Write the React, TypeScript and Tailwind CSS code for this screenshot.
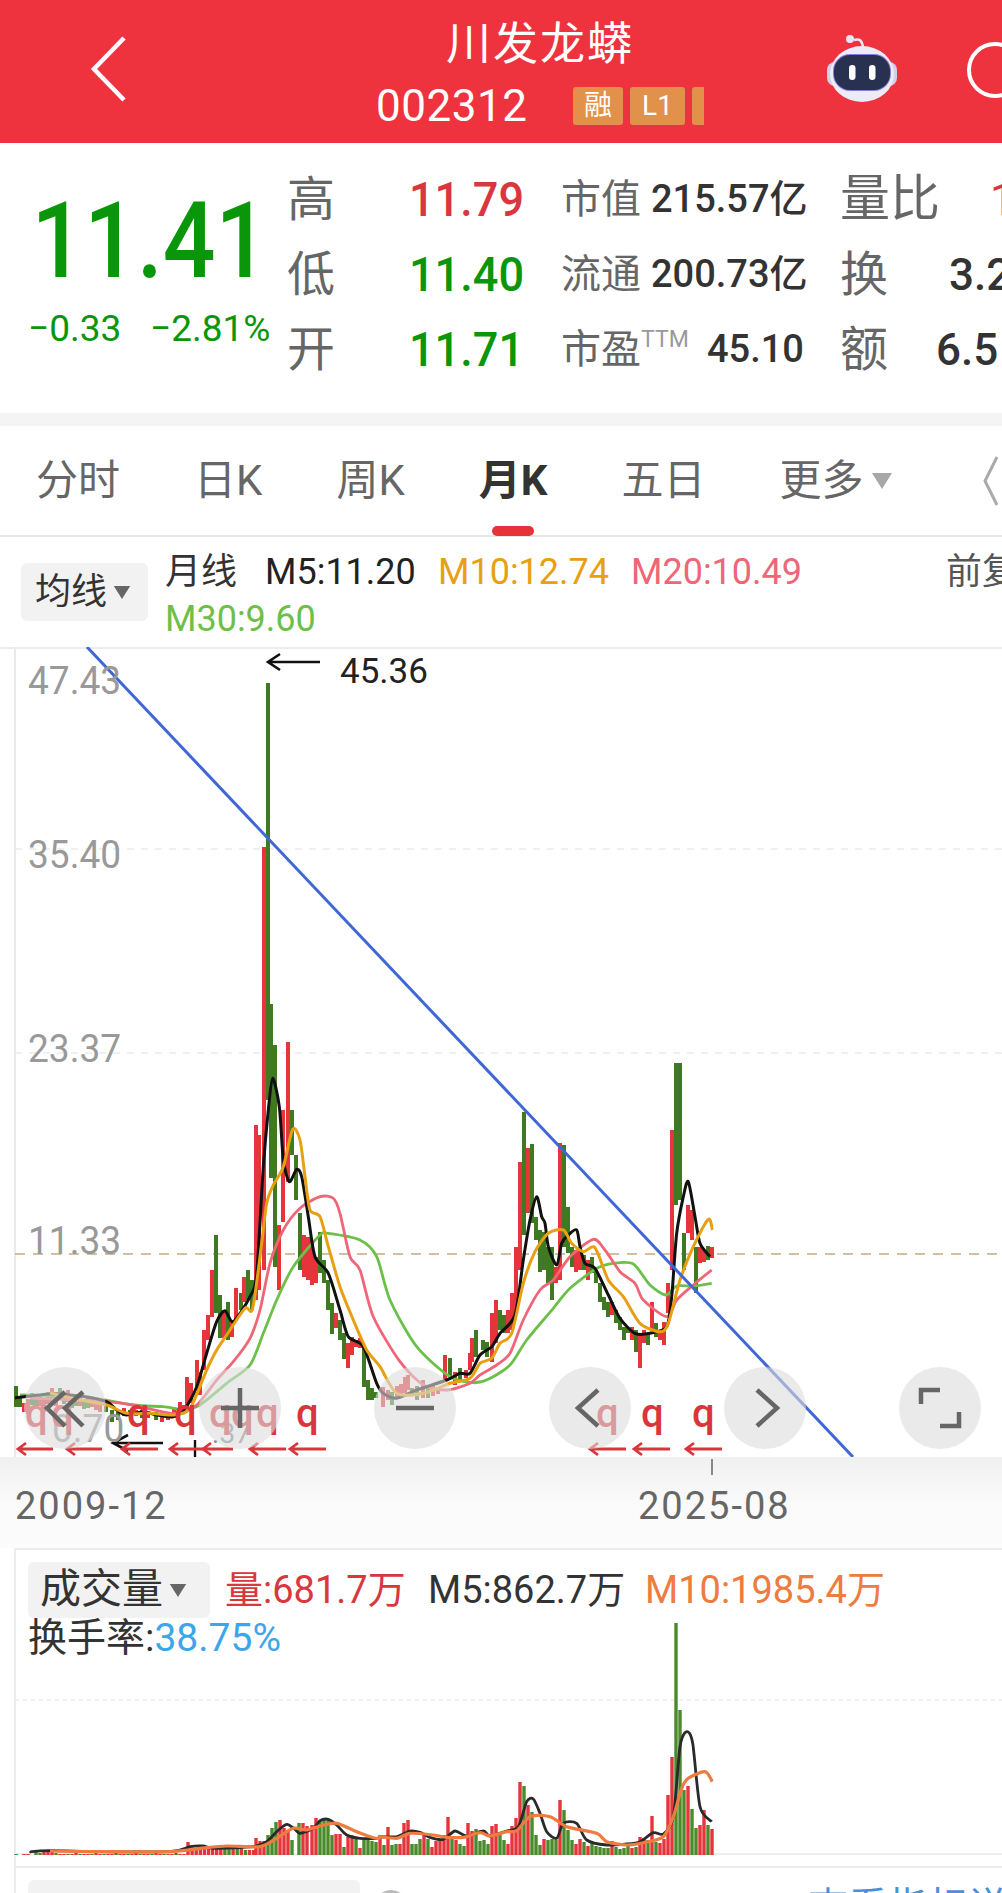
import React from "react";

type P = [number, number];
const z3 = (a: number[]): P[] => { const r: P[] = []; for (let i = 0; i < a.length; i += 2) r.push([a[i] / 3, 1000 + a[i + 1] / 3]); return r; };
const z10 = (a: number[]): P[] => { const r: P[] = []; for (let i = 0; i < a.length; i += 2) r.push([480 + a[i] / 3, 1100 + a[i + 1] / 3]); return r; };
const z11 = (a: number[]): P[] => { const r: P[] = []; for (let i = 0; i < a.length; i += 2) r.push([a[i] / 3, 1740 + a[i + 1] / 3]); return r; };
const z12 = (a: number[]): P[] => { const r: P[] = []; for (let i = 0; i < a.length; i += 2) r.push([380 + a[i] / 3, 1620 + a[i + 1] / 3]); return r; };

function smooth(p: P[]) {
  let d = `M${p[0][0].toFixed(1)} ${p[0][1].toFixed(1)}`;
  for (let i = 0; i < p.length - 1; i++) {
    const a = p[Math.max(0, i - 1)], b = p[i], c = p[i + 1], e = p[Math.min(p.length - 1, i + 2)];
    const k = 1 / 6 * 0.8;
    d += `C${(b[0] + (c[0] - a[0]) * k).toFixed(1)} ${(b[1] + (c[1] - a[1]) * k).toFixed(1)} ${(c[0] - (e[0] - b[0]) * k).toFixed(1)} ${(c[1] - (e[1] - b[1]) * k).toFixed(1)} ${c[0].toFixed(1)} ${c[1].toFixed(1)}`;
  }
  return d;
}

const RED = "#e5353a";
const GREEN = "#3f7a22";

// x, top, bottom, colour (1 red, 0 green)
const candles: number[][] = [
  [16,1386,1407,0],[20,1396,1407,0],[24,1403,1412,1],[28,1399,1414,1],[32,1393,1405,0],[36,1398,1408,0],[40,1395,1406,1],[44,1400,1412,1],[48,1392,1404,1],[52,1388,1402,1],[56,1392,1406,1],[60,1388,1400,0],[64,1396,1404,0],[68,1390,1402,1],[72,1396,1408,0],[76,1398,1406,0],[80,1396,1406,1],[84,1399,1409,0],[88,1398,1408,0],[92,1399,1407,1],[96,1400,1410,1],
  [100,1402,1412,1],[106,1402,1412,0],[112,1410,1422,0],[118,1412,1420,0],[124,1408,1416,1],[130,1410,1416,0],[136,1410,1416,1],[142,1410,1418,0],[148,1412,1418,1],[156,1412,1420,0],[162,1416,1422,1],[168,1412,1420,1],[174,1408,1418,1],[180,1402,1412,1],
  [187,1377,1407,1],[191,1383,1403,1],[197,1360,1390,1],[200,1372,1395,1],[204,1330,1370,1],[208,1315,1340,1],[212,1270,1317,1],[216,1235,1313,0],[220,1295,1338,0],[224,1310,1338,1],[228,1302,1340,0],[232,1320,1337,1],[236,1288,1320,1],[241,1293,1310,0],[244,1277,1302,1],[248,1270,1300,0],[252,1280,1310,0],[256,1125,1300,1],[259,1135,1290,1],[264,847,1270,1],[268,683,1100,0],[271,1004,1178,0],[275,1045,1267,0],[279,1225,1290,1],[283,1110,1222,1],[288,1042,1182,1],[292,1110,1155,0],[296,1155,1200,0],[300,1213,1270,0],[304,1235,1277,1],[308,1237,1280,1],[312,1240,1285,1],[316,1257,1283,1],[320,1232,1273,0],[324,1260,1283,0],[328,1280,1310,0],[332,1303,1334,0],[336,1313,1328,1],[340,1320,1340,0],[344,1333,1359,0],[348,1343,1368,1],[352,1337,1355,1],[356,1340,1347,1],[360,1338,1348,1],[364,1345,1387,0],[368,1380,1400,0],[372,1388,1400,0],[376,1392,1398,0],
  [383,1387,1407,1],[388,1390,1400,1],[392,1392,1405,0],[397,1386,1398,1],[401,1384,1396,1],[405,1377,1393,1],[408,1375,1390,1],[412,1388,1396,0],[417,1386,1400,0],[423,1380,1398,1],[428,1388,1398,0],[433,1384,1396,1],[438,1388,1394,1],[445,1355,1380,1],[450,1358,1377,0],[455,1372,1385,1],[460,1368,1380,0],[466,1370,1378,1],[470,1353,1370,1],[472,1338,1362,1],[476,1330,1357,0],
  [483,1340,1350,0],[487,1342,1357,0],[492,1313,1362,1],[496,1300,1343,1],[500,1310,1330,0],[504,1315,1333,0],[508,1310,1333,1],[512,1293,1330,1],[516,1247,1313,1],[520,1162,1270,1],[524,1112,1235,0],[528,1148,1213,1],[532,1144,1223,0],[536,1217,1240,0],[540,1230,1272,0],[544,1232,1270,0],[548,1247,1283,0],[552,1247,1300,0],[556,1267,1283,1],[560,1143,1280,1],[564,1145,1247,0],[568,1207,1253,0],[572,1247,1267,0],[576,1250,1272,1],[580,1250,1270,1],[584,1255,1270,0],[588,1260,1280,1],[592,1257,1273,0],[596,1270,1283,0],[600,1283,1302,0],[604,1297,1310,0],[608,1302,1317,0],[612,1302,1315,1],[616,1310,1323,0],[620,1317,1330,0],[624,1327,1340,0],[628,1328,1333,0],[632,1327,1340,1],[636,1330,1352,0],[640,1333,1368,1],[644,1330,1343,1],[648,1333,1345,0],[652,1302,1330,1],[656,1323,1337,0],[660,1330,1340,1],[664,1322,1345,1],[668,1283,1313,1],[672,1130,1270,1],[676,1063,1205,0],[680,1063,1200,0],[684,1233,1270,0],[688,1205,1233,1],[692,1210,1240,1],[696,1247,1293,0],[700,1247,1263,1],[704,1250,1262,1],[708,1246,1260,0],[712,1247,1258,1],
];

const m5 = smooth([[15,1398],[50,1394],[80,1396],...z3([320,1205,350,1230,380,1245,430,1235,470,1245,520,1250,555,1225,590,1160,620,1060,650,965,675,932,700,965,750,890,770,820,790,500,805,330,818,235,838,320,850,480,868,545,890,508,905,530,925,650,945,770,985,820,1020,930,1045,1010,1090,1040,1130,1150,1150,1180,1190,1195,1250,1170,1340,1140,1380,1120,1410,1120]),...z10([0,765,35,740,60,700,105,645,130,480,150,360,170,290,185,350,195,370,205,440,230,495,245,430,265,405,290,390,300,440,315,490,345,505,385,585,420,655,465,700,510,700,560,680,575,590,590,400,610,290,625,245,645,350,660,430,690,470])]);
const m10 = smooth([[50,1393],...z3([240,1200,320,1215,380,1240,450,1240,520,1245,570,1225,620,1110,650,1050,680,1005,735,925,758,925,785,730,800,610,820,555,850,500,878,388,900,420,915,530,930,630,960,650,985,740,1020,860,1060,960,1100,1050,1140,1100,1190,1180,1270,1180,1350,1150,1410,1135]),...z10([0,790,35,775,60,730,95,700,130,550,165,455,205,400,250,390,275,430,310,455,345,443,385,540,430,590,480,670,540,695,565,670,600,540,640,440,685,358,697,390])]);
const m20 = smooth([[30,1398],...z3([320,1205,400,1215,520,1240,590,1215,650,1140,700,1085,750,1015,780,930,810,790,850,690,900,625,960,590,1000,595,1020,640,1050,770,1080,810,1120,950,1200,1085,1270,1155,1340,1170,1410,1150]),...z10([0,825,50,795,90,760,130,660,180,570,220,540,270,470,340,418,375,450,420,515,465,550,490,600,560,650,590,600,640,555,695,510])]);
const m30 = smooth([[20,1395],...z3([250,1190,400,1215,490,1220,550,1228,600,1215,680,1150,750,1095,790,1000,830,900,880,800,960,705,985,700,1080,720,1130,770,1170,900,1250,1040,1350,1130,1420,1148]),...z10([25,838,90,795,140,720,220,625,270,565,350,505,400,490,460,492,510,555,558,585,590,558,640,558,695,550])]);

const arrows: P[] = [[18,53],[67,102],[122,158],[170,205],[203,233],[250,286],[290,326],[590,626],[634,670],[686,722]];
const qs: P[] = [[36,0],[62,0],[138,1],[185,1],[220,1],[242,1],[267,1],[307,1],[607,1],[652,1],[703,1]];

const volHeadS = "13,8,7,8,7,8,9,6,9,9,8,8,8,7,5,5,5".split(",").map(Number);
const vol: number[][] = [];
[[16,1,0],[24,1,1],[28,1,1],[36,3,0],[40,2,0],[44,3,1],[48,3,1],[52,3,1]].forEach(v => vol.push(v));
for (let i = 0; i < 33; i++) vol.push([56 + i * 4, i % 5 === 0 ? 2 : 1, i % 3 === 0 ? 0 : 1]);
volHeadS.forEach((h, i) => vol.push([188 + i * 4.1, h, [9, 10, 12, 14].includes(i) ? 0 : 1]));
([[256,17,1],[260,14,1],[264,14,1],[268,20,0],[272,27,0],[276,33,0],[280,35,1],[284,27,1],[288,25,1],[292,15,0],[299,32,0],[303,32,1],[307,29,1],[312,30,1],[316,37,1],[320,34,0],[324,35,0],[328,36,0],[332,20,0],[336,21,1],[340,21,1],[344,8,0],[348,18,1],[352,20,1],[356,16,0],[360,7,1],[364,15,0],[368,15,0],[372,14,0],[376,13,0]] as number[][]).forEach(v => vol.push(v));
const v12 = "20r 10g 28r 10g 11g 11r 32r 35r 11g 11g 16g 20r 16g 8r 14r 14r 20r 38r 16g 15r 11g 9g 32r 24r 26g 14g 15g 11g 29r 31r 20g 15g 11r 29r 37r 73r 69g 50r 43g 20g 10g 16r 15g 16g 15g 55r 45g 25g 15g 11r 16r 13g 9r 12g 9g 8g 7g 7g 14r 8g 6g 7g 11g 7r 8g 18r 17r 15g 39r 13g 12r 16r 60r 98r 232g 145g 65g 69r 46g 27g 30r 45r 30g 26r".split(" ");
v12.forEach((s, i) => vol.push([380 + i * 4, parseInt(s), s.endsWith("r") ? 1 : 0]));

const vm5 = smooth([[32,1853],...z11([95,335,150,332,300,335,510,335,570,320,610,318,640,325,760,320,800,305,830,275,860,253,885,268,900,280,940,265,960,242,985,238,1010,255,1040,285,1080,295,1138,295]),...z12([0,650,50,650,90,633,120,637,150,652,190,658,225,633,260,648,310,633,330,648,380,633,415,620,440,545,460,537,480,580,500,635,530,655,550,610,590,610,620,660,680,675,740,672,780,665,820,638,850,642,880,590,900,380,920,335,938,370,960,560,995,605])]);
const vm10 = smooth([...z11([150,333,300,335,510,335,600,325,680,318,780,320,830,295,880,265,920,270,960,258,1010,250,1070,275,1120,293,1138,295]),...z12([0,650,50,655,90,640,160,645,200,652,250,652,300,638,330,648,380,635,410,632,450,590,510,590,560,620,650,640,680,665,740,675,790,668,850,650,880,590,905,505,925,475,975,455,997,485])]);

const CaretDown = ({ c = "#a8a8a8", w = 22, h = 18 }: { c?: string; w?: number; h?: number }) => (
  <svg className="shrink-0" width={w} height={h} viewBox="0 0 22 18"><path d="M1 1H21L11 17Z" fill={c} /></svg>
);

const Round = ({ d, cx }: { d: string; cx: number }) => (
  <div className="absolute top-[718px] w-[82px] h-[82px] rounded-full bg-[#dcdcdc]/60 flex items-center justify-center" style={{ left: cx - 41 }}>
    <svg width="48" height="48" viewBox="0 0 48 48" fill="none" stroke="#666666" strokeWidth="4.5"><path d={d} /></svg>
  </div>
);

const Robot = () => (
  <svg className="shrink-0" width="76" height="70" viewBox="0 0 76 70">
    <path d="M30 8C36 6 38 9 39 15" fill="none" stroke="#e8e6f5" strokeWidth="2.5" />
    <circle cx="26" cy="7" r="4" fill="#e8e6f5" />
    <rect x="3" y="30" width="70" height="24" rx="8" fill="#cfd0ea" />
    <ellipse cx="38" cy="42" rx="32" ry="28" fill="#ecebf8" />
    <rect x="9" y="22" width="58" height="37" rx="17" fill="#8c7ad8" />
    <rect x="10" y="23" width="56" height="35" rx="16" fill="#28314f" />
    <rect x="25" y="33" width="6.5" height="15" rx="3.2" fill="#ffffff" />
    <rect x="45" y="33" width="6.5" height="15" rx="3.2" fill="#ffffff" />
  </svg>
);

const Lbl = ({ t, top, left = 28 }: { t: string; top: number; left?: number }) => (
  <span className="absolute text-[#999999] text-[39px] leading-[40px] origin-left scale-x-[0.95]" style={{ top, left }}>{t}</span>
);

export default function App() {
  return (
    <div className="w-[1002px] h-[1893px] overflow-hidden bg-white font-['Roboto','Noto_Sans_CJK_SC',sans-serif]">
      {/* header */}
      <header className="h-[143px] bg-[#ef333e] grid grid-cols-[300px_480px_222px] text-white">
        <div className="pl-[88px] pt-[35px]">
          <svg width="42" height="68" viewBox="0 0 42 68" fill="none" stroke="#ffffff" strokeWidth="4.5"><path d="M36 3L6 34L36 65" /></svg>
        </div>
        <div className="flex flex-col items-center pt-[18px]">
          <h1 className="text-[45px] leading-[54px] tracking-[2px]">川发龙蟒</h1>
          <div className="flex items-center mt-[14px] h-[40px]">
            <span className="text-[44px] leading-[40px] w-[146px] tracking-[0.5px] whitespace-nowrap">002312</span>
            <span className="ml-[51px] w-[50px] h-[38px] rounded-[3px] bg-[#e2914a] flex items-center justify-center text-[28px]">融</span>
            <span className="ml-[7px] w-[55px] h-[38px] rounded-[3px] bg-[#e2914a] flex items-center justify-center text-[28px]">L1</span>
            <span className="ml-[7px] w-[12px] h-[38px] rounded-l-[3px] bg-[#e2914a]"></span>
          </div>
        </div>
        <div className="flex items-start pt-[32px] pl-[44px]">
          <Robot />
          <div className="ml-[67px] mt-[10px] w-[56px] h-[56px] rounded-full border-4 border-white shrink-0"></div>
        </div>
      </header>

      {/* quote */}
      <section className="h-[270px] flex pt-[19px] relative">
        <div className="w-[287px] shrink-0 pl-[28px] text-[#0a960a]">
          <div className="text-[106px] leading-[100px] mt-[29px] font-medium origin-left scale-x-[0.875] pl-[4px]">11.41</div>
          <div className="flex mt-[18px] text-[37px] leading-[40px]">
            <span className="w-[122px]">−0.33</span>
            <span>−2.81%</span>
          </div>
        </div>
        <div className="w-[274px] shrink-0 grid grid-rows-[75px_75px_75px] text-[#666666] text-[48px]">
          {[["高", "11.79", "text-[#d9363e]"], ["低", "11.40", "text-[#0a960a]"], ["开", "11.71", "text-[#0a960a]"]].map(([a, b, c]) => (
            <div key={a} className="flex items-center">
              <span className="w-[122px] leading-[50px]">{a}</span>
              <span className={`${c} text-[49px] leading-[50px] font-medium origin-left scale-x-[0.92]`}>{b}</span>
            </div>
          ))}
        </div>
        <div className="w-[279px] shrink-0 grid grid-rows-[75px_75px_75px] text-[40px] text-[#666666]">
          <div className="flex items-center"><span className="w-[90px]">市值</span><span className="text-[#333333] text-[38px] font-medium whitespace-nowrap">215.57亿</span></div>
          <div className="flex items-center"><span className="w-[90px]">流通</span><span className="text-[#333333] text-[38px] font-medium whitespace-nowrap">200.73亿</span></div>
          <div className="flex items-center">
            <span>市盈</span><span className="text-[23px] text-[#999999] mb-[18px] w-[46px]">TTM</span>
            <span className="text-[#333333] text-[38px] font-medium ml-[20px]">45.10</span>
          </div>
        </div>
        <div className="flex-1 grid grid-rows-[75px_75px_75px] text-[48px] text-[#666666] whitespace-nowrap">
          <div className="flex items-center"><span className="w-[150px] shrink-0 text-[50px]">量比</span><span className="text-[#d9363e] text-[44px]">1</span></div>
          <div className="flex items-center"><span className="w-[109px] shrink-0">换</span><span className="text-[#333333] text-[44px] font-medium">3.2</span></div>
          <div className="flex items-center"><span className="w-[96px] shrink-0">额</span><span className="text-[#333333] text-[44px] font-medium">6.5</span></div>
        </div>
      </section>
      <div className="h-[13px] bg-[#f4f4f4]"></div>

      {/* tabs */}
      <nav className="h-[111px] border-b-2 border-[#e8e8e8] flex items-center pl-[36px] gap-[74px] text-[42px] leading-[60px] text-[#666666] whitespace-nowrap relative">
        <span>分时</span>
        <span>日K</span>
        <span>周K</span>
        <span className="relative font-bold text-[#333333]">月K
          <span className="absolute left-[13px] top-[75px] w-[42px] h-[10px] rounded-full bg-[#e8323a]"></span>
        </span>
        <span>五日</span>
        <span className="flex items-center gap-[8px]">更多<CaretDown /></span>
        <svg className="ml-[16px] shrink-0" width="16" height="52" viewBox="0 0 16 52" fill="none" stroke="#aaaaaa" strokeWidth="3"><path d="M14 2L2 26L14 50" /></svg>
      </nav>

      {/* indicator row */}
      <div className="h-[110px] flex relative">
        <div className="ml-[21px] mt-[26px] w-[127px] h-[58px] rounded-[6px] bg-[#f2f2f2] flex items-center pl-[14px] gap-[6px] text-[36px] text-[#333333] shrink-0">均线<CaretDown c="#666666" w={18} h={15} /></div>
        <div className="ml-[17px] mt-[13px] w-[900px] shrink-0">
          <div className="flex items-center h-[44px] text-[36px] whitespace-nowrap">
            <span className="w-[100px] shrink-0 text-[#333333] text-[36px]">月线</span>
            <span className="w-[173px] shrink-0 text-[#222222]">M5:11.20</span>
            <span className="w-[193px] shrink-0 text-[#e8a013]">M10:12.74</span>
            <span className="w-[315px] shrink-0 text-[#ee6677]">M20:10.49</span>
            <span className="text-[#555555] text-[36px]">前复</span>
          </div>
          <div className="h-[44px] text-[36px] leading-[50px] text-[#6cc04a]">M30:9.60</div>
        </div>
      </div>

      {/* main chart */}
      <div className="relative h-[810px] border-t-2 border-[#ececec]">
        <svg className="absolute -top-[2px] left-0" width="1002" height="810" viewBox="0 647 1002 810" fill="none">
          <line x1="15" y1="647" x2="15" y2="1457" stroke="#eaeaea" strokeWidth="2" />
          <line x1="15" y1="849" x2="1002" y2="849" stroke="#ececec" strokeWidth="1.5" strokeDasharray="7 7" />
          <line x1="15" y1="1053" x2="1002" y2="1053" stroke="#ececec" strokeWidth="1.5" strokeDasharray="7 7" />
          <line x1="15" y1="1254" x2="1002" y2="1254" stroke="#c4ab80" strokeWidth="1.5" strokeDasharray="10 8" />
          {candles.map(([x, a, b, c], i) => (
            <rect key={i} x={x - 2} y={a} width="4" height={b - a} fill={c ? RED : GREEN} />
          ))}
          <path d={m30} stroke="#6cc04a" strokeWidth="2.8" />
          <path d={m20} stroke="#ee6677" strokeWidth="2.8" />
          <path d={m5} stroke="#111111" strokeWidth="3" strokeLinejoin="round" />
          <path d={m10} stroke="#e8a013" strokeWidth="3" />
          <line x1="87" y1="647" x2="853" y2="1457" stroke="#3f67d6" strokeWidth="3" />
          <path d="M268 662H320M280 654L268 662L280 670" stroke="#111111" strokeWidth="2.6" />
          <path d="M195 1440V1457" stroke="#111111" strokeWidth="2.4" />
          <path d="M113 1443H163M128 1435L113 1443L128 1451" stroke="#111111" strokeWidth="2.6" />
          {arrows.map(([a, b]) => (
            <path key={a} d={`M${a} 1449H${b}M${a + 8} 1443L${a} 1449L${a + 8} 1455`} stroke="#d8363c" strokeWidth="2.8" />
          ))}
        </svg>
        <Lbl t="47.43" top={12} />
        <Lbl t="35.40" top={186} />
        <Lbl t="23.37" top={380} />
        <Lbl t="11.33" top={572} />
        <Lbl t="0.70" top={760} left={52} />
        <span className="absolute left-[212px] top-[770px] text-[28px] leading-[30px] text-[#888888]">.37</span>
        <span className="absolute left-[340px] top-[3px] text-[35px] leading-[40px] text-[#222222]">45.36</span>
        {qs.map(([x]) => (
          <span key={x} className="absolute text-[40px] leading-[44px] font-medium text-[#d8363c]" style={{ left: x - 11, top: 743 }}>q</span>
        ))}
        <Round cx={65} d="M24 8L6 24L24 42M42 8L24 24L42 42" />
        <Round cx={240} d="M24 4V44M5 24H43" />
        <Round cx={415} d="M5 24H43" />
        <Round cx={590} d="M32 6L12 24L32 42" />
        <Round cx={765} d="M16 6L36 24L16 42" />
        <Round cx={940} d="M5 20V6H24M43 28V42H24" />
      </div>

      {/* date axis */}
      <div className="h-[91px] bg-gradient-to-b from-[#f0f0f0] via-[#fafafa] to-[#fcfcfc] relative pl-[15px] pt-[27px] text-[38px] leading-[44px] text-[#666666] tracking-[2px]">
        <span>2009-12</span>
        <span className="absolute left-[638px] top-[27px]">2025-08</span>
        <span className="absolute left-[711px] top-[2px] w-[2px] h-[16px] bg-[#888888]"></span>
      </div>

      {/* volume */}
      <div className="relative h-[318px] border-t-2 border-l-2 border-[#ececec] ml-[14px]">
        <svg className="absolute -left-[16px] -top-[2px]" width="1002" height="318" viewBox="0 1548 1002 318" fill="none">
          <line x1="15" y1="1700" x2="1002" y2="1700" stroke="#ececec" strokeWidth="1.5" strokeDasharray="4 4" />
          <line x1="15" y1="1854" x2="1002" y2="1854" stroke="#ececec" strokeWidth="2" />
          {vol.map(([x, h, c], i) => (
            <rect key={i} x={x - 1.7} y={1855 - h} width="3.4" height={h} fill={c ? RED : "#4b8a2b"} />
          ))}
          <path d={vm5} stroke="#2a2a2a" strokeWidth="2.8" />
          <path d={vm10} stroke="#ee7b3f" strokeWidth="3.2" />
        </svg>
        <div className="relative pl-[12px] pt-[12px]">
          <div className="flex items-center h-[56px] text-[38px] whitespace-nowrap">
            <div className="w-[182px] h-[56px] rounded-[6px] bg-[#f2f2f2] flex items-center pl-[12px] gap-[6px] text-[#333333] text-[41px] shrink-0">成交量<CaretDown c="#666666" w={18} h={15} /></div>
            <span className="ml-[15px] w-[203px] shrink-0 text-[#d9363e]">量:681.7万</span>
            <span className="w-[217px] shrink-0 text-[#333333]">M5:862.7万</span>
            <span className="text-[#ee7b3f]">M10:1985.4万</span>
          </div>
          <div className="h-[40px] mt-[-2px] text-[39px] leading-[44px] text-[#333333] whitespace-nowrap">换手率:<span className="text-[#3ba7e8]">38.75%</span></div>
        </div>
      </div>

      {/* next panel */}
      <div className="border-t-2 border-l-2 border-[#ececec] ml-[14px] h-[40px] flex pt-[12px] pl-[12px] relative">
        <div className="w-[332px] h-[40px] rounded-[6px] bg-[#f2f2f2]"></div>
        <div className="ml-[14px] mt-[10px] w-[34px] h-[34px] rounded-full border-4 border-[#bbbbbb]"></div>
        <span className="absolute left-[792px] top-[18px] text-[40px] leading-[44px] text-[#4a8fd8] whitespace-nowrap">查看指标说明</span>
      </div>
    </div>
  );
}
